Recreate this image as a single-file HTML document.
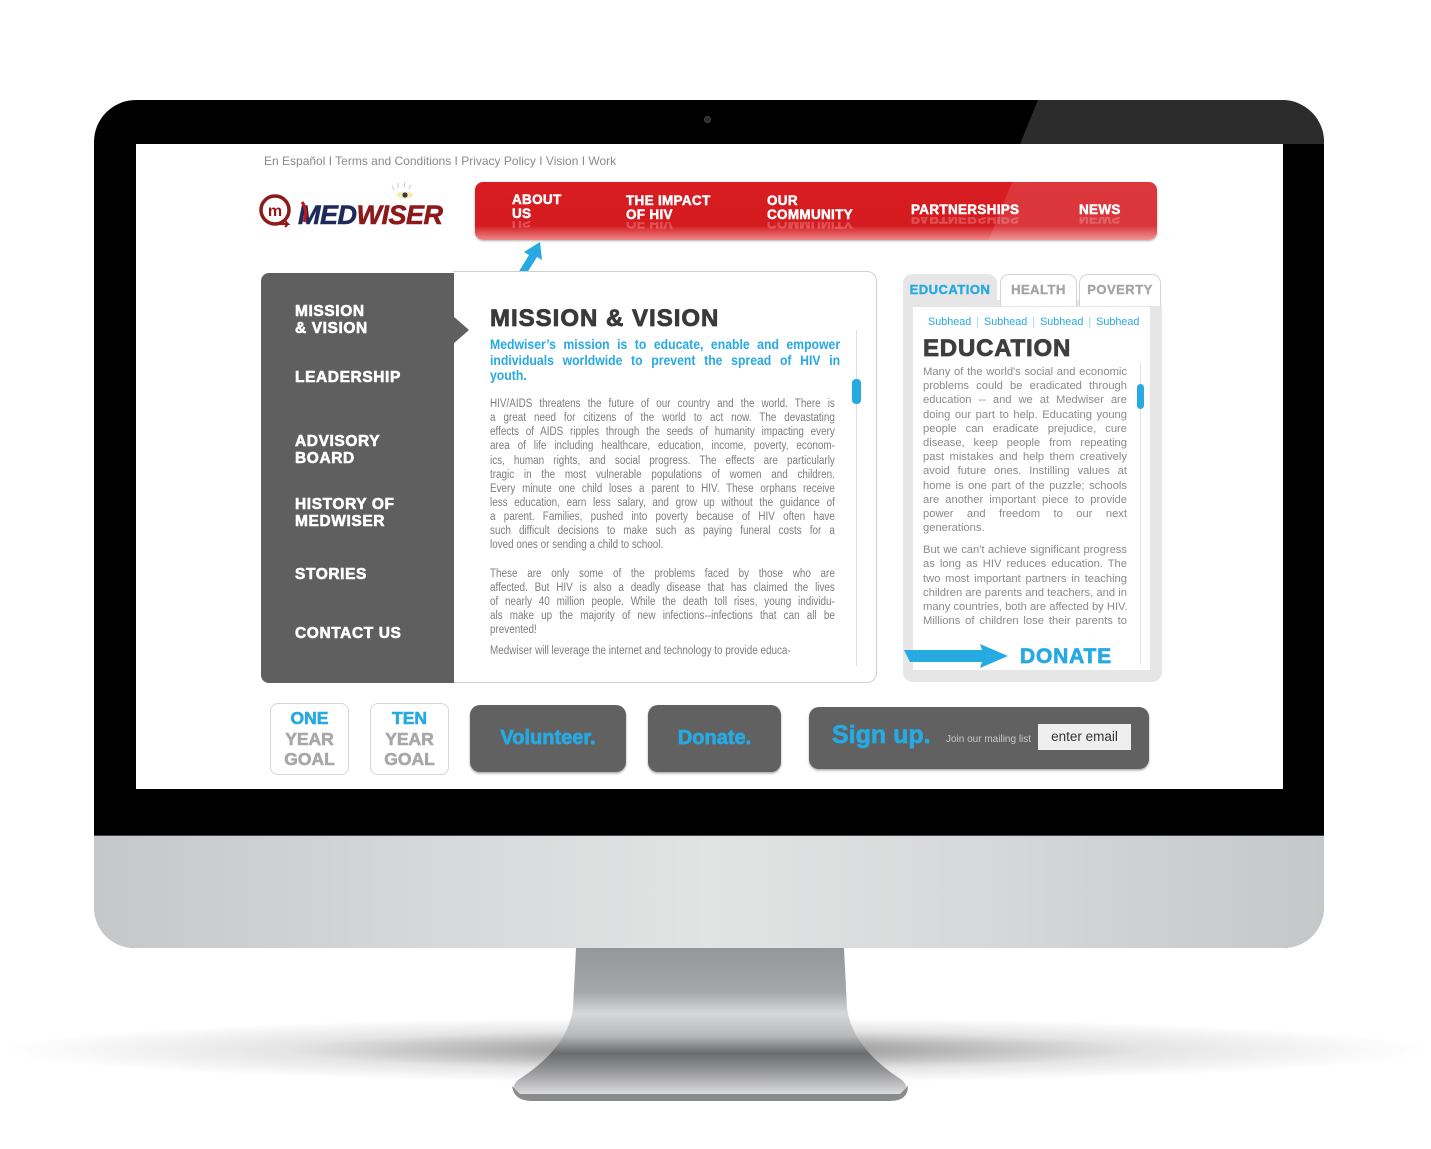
<!DOCTYPE html>
<html><head><meta charset="utf-8"><style>
*{margin:0;padding:0;box-sizing:border-box}
body{width:1431px;height:1149px;background:#fff;position:relative;overflow:hidden;font-family:"Liberation Sans",Arial,sans-serif}
.a{position:absolute}
.shadow{left:0;top:995px;width:1431px;height:110px;background:radial-gradient(ellipse 50% 30% at 50% 50%,rgba(90,90,90,.75),rgba(150,150,150,.25) 60%,rgba(255,255,255,0) 100%)}
.bezel{left:94px;top:100px;width:1230px;height:848px;border-radius:42px;background:#000;overflow:hidden}
.chin{left:94px;top:835px;width:1230px;height:113px;border-radius:0 0 40px 40px;background:linear-gradient(90deg,#c6c7c9,#d8d9da 30%,#e2e3e3 50%,#d8d9da 70%,#c6c7c9);border-top:1px solid #444}
.screen{left:136px;top:144px;width:1147px;height:645px;background:#fff;overflow:hidden}
.toplinks{left:264px;top:154px;font-size:12px;color:#8a8a8a}
.nav{left:475px;top:182px;width:682px;height:58px;border-radius:8px;background:linear-gradient(#d81c22,#d41b20 75%,#e88 100%);overflow:hidden;box-shadow:0 1px 2px rgba(0,0,0,.3)}
.nav .g{position:absolute;left:525px;top:0;width:200px;height:60px;background:rgba(255,255,255,.12);transform:skewX(-22deg)}
.ni{position:absolute;color:#fff;font-weight:bold;font-size:13.5px;line-height:14px;letter-spacing:.3px;-webkit-text-stroke:.5px #fff}
.ni i{display:block;font-style:normal;transform:scaleY(-1);opacity:.22;height:8px;overflow:hidden;line-height:14px}
.left{left:261px;top:273px;width:193px;height:410px;background:#5f5f5f;border-radius:8px 0 0 8px}
.ln{position:absolute;left:34px;color:#fff;font-weight:bold;font-size:15.5px;line-height:17px;letter-spacing:.6px;-webkit-text-stroke:.6px #fff}
.main{left:453px;top:271px;width:424px;height:412px;border:1.5px solid #cfcfcf;border-left:none;border-radius:0 10px 10px 0;background:#fff}
.bt{font-size:11.5px;color:#7d7d7d;width:401px;transform:scaleX(.86);transform-origin:0 0;line-height:14.15px}
.bt div{text-align:justify;text-align-last:justify;height:14.15px;overflow:hidden}
.bt div.l{text-align-last:left}
.rp{left:903px;top:300px;width:259px;height:382px;background:#e6e6e6;border-radius:0 8px 10px 10px}
.tab{position:absolute;top:274px;height:32px;border:1.5px solid #d4d4d4;border-bottom:none;border-radius:9px 9px 0 0;background:#fff;font-weight:bold;font-size:13px;color:#a5a5a5;text-align:center;padding-top:7px;letter-spacing:.5px;-webkit-text-stroke:.4px currentColor}
.rt{font-size:11.2px;color:#8a8a8a;width:204px;line-height:14.2px}
.rt div{text-align:justify;text-align-last:justify;height:14.2px;white-space:nowrap}
.gbox{position:absolute;top:703px;width:79px;height:72px;border:1.5px solid #d6d6d6;border-radius:8px;text-align:center;font-weight:bold;font-size:17.5px;line-height:20.5px;padding-top:4px;color:#a8a8a8;-webkit-text-stroke:.6px currentColor}
.gbox b{color:#27a9e1}
.btn{position:absolute;background:#616161;border-radius:10px;box-shadow:0 1.5px 2px rgba(0,0,0,.35);color:#27a9e1;font-weight:bold}
.btn .t{-webkit-text-stroke:.7px #27a9e1}
</style></head><body>
<div class="a shadow"></div>
<svg class="a" viewBox="0 0 400 155" width="400" height="155" style="left:510px;top:948px">
<defs><linearGradient id="sg" x1="0" y1="0" x2="0" y2="1">
<stop offset="0" stop-color="#959698"/><stop offset=".3" stop-color="#a6a7a8"/><stop offset=".45" stop-color="#d6d7d8"/><stop offset=".6" stop-color="#b8b9ba"/><stop offset=".72" stop-color="#6a6b6d"/><stop offset=".85" stop-color="#999a9c"/><stop offset="1" stop-color="#dcdcdd"/></linearGradient></defs>
<path d="M66 0 L334 0 L337 60 Q342 100 392 132 Q402 142 390 146 L10 146 Q-2 142 8 132 Q58 100 63 60 Z" fill="url(#sg)"/>
<path d="M2 138 Q4 153 22 153 L380 153 Q398 153 398 138 L390 146 L10 146 Z" fill="#8a8b8d"/>
</svg>
<div class="a bezel">
  <svg class="a" style="left:0;top:0" width="1230" height="44"><polygon points="944,0 1230,0 1230,44 926,44" fill="#2c2c2c"/></svg>
  <div class="a" style="left:610px;top:16px;width:7px;height:7px;border-radius:50%;background:#2a2a2a;border:1px solid #444"></div>
</div>
<div class="a chin"></div>
<div class="a screen"></div>

<div class="a toplinks">En Español I Terms and Conditions I Privacy Policy I Vision I Work</div>

<svg class="a" style="left:258px;top:180px" width="210" height="50" viewBox="0 0 210 50">
<circle cx="17" cy="30" r="14" fill="none" stroke="#8d1a1a" stroke-width="3.5"/>
<text x="17" y="36" font-family="Liberation Sans" font-weight="bold" font-size="16" fill="#8d1a1a" text-anchor="middle">m</text>
<path d="M17 44 L30 44 L27 41 M30 44 L27 47" stroke="#8d1a1a" stroke-width="2" fill="none"/>
<g stroke="#c8c8c8" stroke-width="1"><line x1="140" y1="3" x2="140" y2="8"/><line x1="147" y1="2" x2="146" y2="7"/><line x1="153" y1="5" x2="151" y2="9"/><line x1="134" y1="6" x2="136" y2="10"/></g>
<ellipse cx="147" cy="15" rx="8" ry="3.5" fill="#ffe9a8"/><circle cx="147" cy="15" r="2.6" fill="#2a3a5a"/>
<text x="40" y="44" font-family="Liberation Sans" font-weight="bold" font-style="italic" font-size="27" letter-spacing="-0.5" stroke-width=".6"><tspan fill="#1e2a5a" stroke="#1e2a5a">MED</tspan><tspan fill="#8d1a1a" stroke="#8d1a1a">WISER</tspan></text>
<path d="M44 22 Q50 30 46 42" stroke="#c4161c" stroke-width="3" fill="none"/>
</svg>

<div class="a nav"><div class="g"></div>
  <div class="ni" style="left:37px;top:11px">ABOUT<br>US<i>US</i></div>
  <div class="ni" style="left:151px;top:12px">THE IMPACT<br>OF HIV<i>OF HIV</i></div>
  <div class="ni" style="left:292px;top:12px">OUR<br>COMMUNITY<i>COMMUNITY</i></div>
  <div class="ni" style="left:436px;top:21px">PARTNERSHIPS<i>PARTNERSHIPS</i></div>
  <div class="ni" style="left:604px;top:21px">NEWS<i>NEWS</i></div>
</div>
<svg class="a" style="left:512px;top:240px" width="36" height="34"><path d="M6 33 L17 15 L12 12 L28 2 L30 20 L25 17 L15 33 Z" fill="#27a9e1"/></svg>

<div class="a main"></div>
<div class="a left">
  <div class="ln" style="top:30px">MISSION<br>&amp; VISION</div>
  <div class="ln" style="top:96px">LEADERSHIP</div>
  <div class="ln" style="top:160px">ADVISORY<br>BOARD</div>
  <div class="ln" style="top:223px">HISTORY OF<br>MEDWISER</div>
  <div class="ln" style="top:293px">STORIES</div>
  <div class="ln" style="top:352px">CONTACT US</div>
</div>
<svg class="a" style="left:453px;top:316px" width="18" height="28"><path d="M0 0 L0 28 L16 14 Z" fill="#5f5f5f"/></svg>

<div class="a" style="left:490px;top:305px;font-size:24px;font-weight:bold;color:#3a3a3a;letter-spacing:1px;-webkit-text-stroke:.8px #3a3a3a">MISSION &amp; VISION</div>
<div class="a" style="left:490px;top:337px;width:389px;transform:scaleX(.9);transform-origin:0 0;font-size:13.6px;line-height:15.5px;font-weight:bold;color:#27a9e1">
<div style="text-align:justify;text-align-last:justify;height:15.5px">Medwiser’s mission is to educate, enable and empower</div>
<div style="text-align:justify;text-align-last:justify;height:15.5px">individuals worldwide to prevent the spread of HIV in</div>
<div>youth.</div></div>
<div class="a" style="left:856px;top:330px;width:1px;height:336px;background:#e2e2e2"></div>
<div class="a" style="left:852px;top:379px;width:9px;height:25px;border-radius:4px;background:#27a9e1"></div>
<div class="a bt" style="left:490px;top:397px">
<div>HIV/AIDS threatens the future of our country and the world. There is</div>
<div>a great need for citizens of the world to act now. The devastating</div>
<div>effects of AIDS ripples through the seeds of humanity impacting every</div>
<div>area of life including healthcare, education, income, poverty, econom-</div>
<div>ics, human rights, and social progress. The effects are particularly</div>
<div>tragic in the most vulnerable populations of women and children.</div>
<div>Every minute one child loses a parent to HIV. These orphans receive</div>
<div>less education, earn less salary, and grow up without the guidance of</div>
<div>a parent. Families, pushed into poverty because of HIV often have</div>
<div>such difficult decisions to make such as paying funeral costs for a</div>
<div class="l">loved ones or sending a child to school.</div>
<div style="height:14px"></div>
<div>These are only some of the problems faced by those who are</div>
<div>affected. But HIV is also a deadly disease that has claimed the lives</div>
<div>of nearly 40 million people. While the death toll rises, young individu-</div>
<div>als make up the majority of new infections--infections that can all be</div>
<div class="l">prevented!</div>
<div style="height:7px"></div>
<div class="l">Medwiser will leverage the internet and technology to provide educa-</div>
</div>

<div class="a rp"></div>
<div class="tab" style="left:903px;width:94px;background:#e6e6e6;border-color:#e6e6e6;color:#27a9e1">EDUCATION</div>
<div class="tab" style="left:1000px;width:77px">HEALTH</div>
<div class="tab" style="left:1079px;width:82px">POVERTY</div>
<div class="a" style="left:913px;top:307px;width:237px;height:363px;background:#fff"></div>
<div class="a" style="left:928px;top:316px;font-size:10.8px;color:#27a9e1;white-space:nowrap">Subhead<span style="color:#9bd3ef;margin:0 5px">|</span>Subhead<span style="color:#9bd3ef;margin:0 5px">|</span>Subhead<span style="color:#9bd3ef;margin:0 5px">|</span>Subhead</div>
<div class="a" style="left:923px;top:335px;font-size:24px;font-weight:bold;color:#3e3e3e;letter-spacing:.8px;-webkit-text-stroke:.8px #3e3e3e">EDUCATION</div>
<div class="a" style="left:1140px;top:363px;width:1px;height:302px;background:#e2e2e2"></div>
<div class="a" style="left:1137px;top:384px;width:7px;height:25px;border-radius:4px;background:#27a9e1"></div>
<div class="a rt" style="left:923px;top:365px">
<div>Many of the world's social and economic</div>
<div>problems could be eradicated through</div>
<div>education -- and we at Medwiser are</div>
<div>doing our part to help. Educating young</div>
<div>people can eradicate prejudice, cure</div>
<div>disease, keep people from repeating</div>
<div>past mistakes and help them creatively</div>
<div>avoid future ones. Instilling values at</div>
<div>home is one part of the puzzle; schools</div>
<div>are another important piece to provide</div>
<div>power and freedom to our next</div>
<div style="text-align-last:left">generations.</div>
<div style="height:8px"></div>
<div>But we can't achieve significant progress</div>
<div>as long as HIV reduces education. The</div>
<div>two most important partners in teaching</div>
<div>children are parents and teachers, and in</div>
<div>many countries, both are affected by HIV.</div>
<div>Millions of children lose their parents to</div>
</div>
<div class="a" style="left:913px;top:630px;width:225px;height:40px;background:#fff"></div>
<svg class="a" style="left:904px;top:643px" width="106" height="28"><path d="M0 7 L78 7 L76 1 L104 13 L76 25 L78 19 L6 19 Z" fill="#27a9e1"/></svg>
<div class="a" style="left:1020px;top:645px;font-size:21px;font-weight:bold;color:#27a9e1;letter-spacing:.8px;-webkit-text-stroke:.7px #27a9e1">DONATE</div>

<div class="gbox" style="left:270px"><b>ONE</b><br>YEAR<br>GOAL</div>
<div class="gbox" style="left:370px"><b>TEN</b><br>YEAR<br>GOAL</div>
<div class="btn" style="left:470px;top:705px;width:156px;height:67px;font-size:20px;line-height:67px;text-align:center"><span class="t">Volunteer.</span></div>
<div class="btn" style="left:648px;top:705px;width:133px;height:67px;font-size:20px;line-height:67px;text-align:center"><span class="t">Donate.</span></div>
<div class="btn" style="left:809px;top:707px;width:340px;height:62px">
  <span class="a t" style="left:23px;top:14px;font-size:25px">Sign up.</span>
  <span class="a" style="left:137px;top:27px;font-size:10px;color:#c8c8c8;font-weight:normal">Join our mailing list</span>
  <div class="a" style="left:229px;top:17px;width:93px;height:26px;background:#efefef;color:#333;font-weight:normal;font-size:13.5px;line-height:26px;text-align:center">enter email</div>
</div>
</body></html>
